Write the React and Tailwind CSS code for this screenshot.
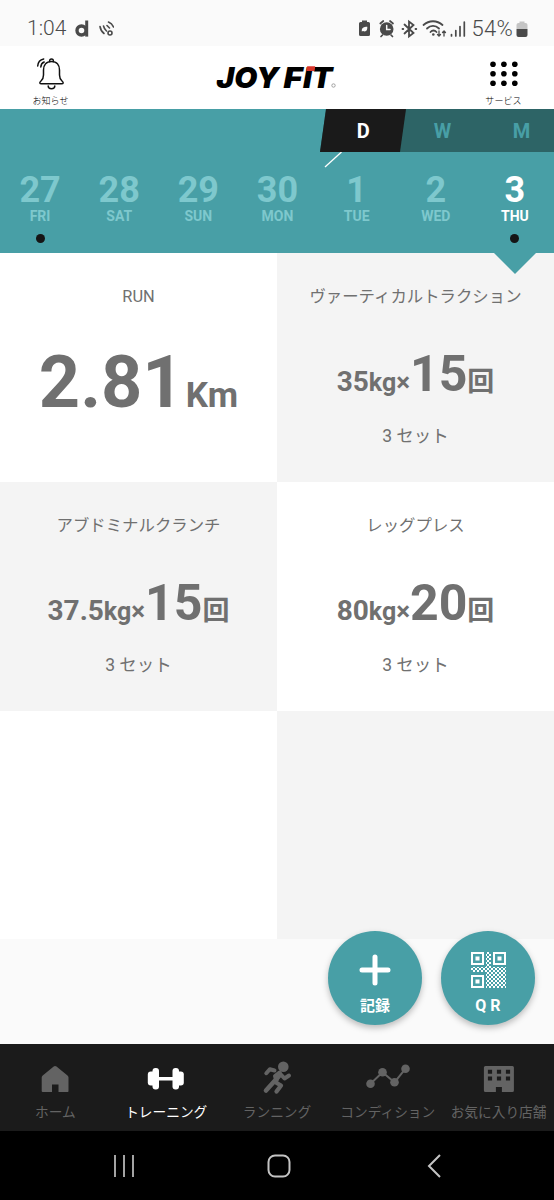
import React from 'react';

const DAYS = [
  { date: '27', day: 'FRI', dot: true },
  { date: '28', day: 'SAT' },
  { date: '29', day: 'SUN' },
  { date: '30', day: 'MON' },
  { date: '1', day: 'TUE' },
  { date: '2', day: 'WED' },
  { date: '3', day: 'THU', dot: true, active: true },
];

const WORKOUTS = [
  { name: 'ヴァーティカルトラクション', weight: '35', reps: '15', bg: 'bg-[#f4f4f4]' },
  { name: 'アブドミナルクランチ', weight: '37.5', reps: '15', bg: 'bg-[#f4f4f4]' },
  { name: 'レッグプレス', weight: '80', reps: '20', bg: 'bg-white' },
];

const StatusBar = () => (
  <div className="h-[46px] bg-[#fafafa] flex items-center pt-[11px] pl-[27px] pr-[26px] text-[#4a4a4a]">
    <span className="text-[21px] leading-none font-light">1:04</span>
    <svg width="40" height="22" viewBox="0 0 40 22" className="ml-[8px]" fill="none" stroke="currentColor">
      <circle cx="7.5" cy="12.5" r="4.5" strokeWidth="3.4" />
      <path d="M12.7 2.5V18.6" strokeWidth="3" />
      <g strokeWidth="1.6" strokeLinecap="round">
        <path d="M26 8.5c.5 3 2 5.500 4 7" />
        <path d="M29.500 8c.5 2 1.500 3.700 3 5" />
        <path d="M33 7.500l2.500 2.500M34.500 4c2.500 1 4 2.500 5 5" />
        <circle cx="36" cy="15" r="2" />
      </g>
    </svg>
    <div className="flex-1" />
    <svg width="108" height="22" viewBox="0 0 108 22" fill="none" stroke="currentColor" strokeLinecap="round">
      <path d="M4 4V2.500h5V4h1.500a1.500 1.500 0 0 1 1.500 1.500v11a1.500 1.500 0 0 1-1.500 1.500h-8a1.500 1.500 0 0 1-1.500-1.500v-11A1.500 1.500 0 0 1 2.500 4z" fill="currentColor" stroke="none" />
      <path d="M3.800 13.500c-.3-4 2-4.500 5.500-4.700.2 3.700-1.300 5.500-4.300 4.200" fill="#fafafa" stroke="none" />
      <circle cx="28.700" cy="11" r="6.800" fill="currentColor" stroke="none" />
      <path d="M22.300 5.500l3-2.500M35 5.500l-3-2.500M24.500 17l-1.500 1.500M33 17l1.500 1.500" strokeWidth="1.700" />
      <path d="M28.700 7.500V11.500h3.300" stroke="#fafafa" strokeWidth="1.500" />
      <path d="M46.500 6.500l9 8.500-4.500 3.500V3.500l4.500 3.500-9 8.500M44.500 11h.8M57.500 11h.8" strokeWidth="1.800" />
      <g strokeWidth="1.800">
        <path d="M65.500 7c5.500-5 13.500-5 19 0" />
        <path d="M69 10.500c3.500-3.500 8.500-3.500 12 0" />
        <path d="M72.500 14c1.800-2 4.200-2 6 0" />
      </g>
      <circle cx="75.300" cy="16.500" r="1.300" fill="currentColor" stroke="none" />
      <path d="M81 13v5M79.500 16.500l1.500 1.500 1.500-1.500M86 18v-5M84.500 14.500l1.500-1.500 1.500 1.500" strokeWidth="1.300" />
      <path d="M93.500 16.500v1.500M97.800 12.500v5.500M102 8.500v9.500M106.300 4V18" strokeWidth="1.700" />
    </svg>
    <span className="ml-[5px] text-[22px] leading-none font-light tracking-[0.3px]">54%</span>
    <svg width="12" height="18" viewBox="0 0 12 18" className="ml-[3px]">
      <path d="M3.500 1.500h5V3h1a2 2 0 0 1 2 2v4H.5V5a2 2 0 0 1 2-2h1z" fill="#c4c4c4" />
      <path d="M.5 9h11v6a2 2 0 0 1-2 2h-7a2 2 0 0 1-2-2z" fill="#4a4a4a" />
    </svg>
  </div>
);

const Header = () => (
  <header className="h-[63px] bg-white flex justify-between text-black">
    <button className="w-[101px] flex flex-col items-center pt-[10px]">
      <svg width="32" height="35" viewBox="0 0 32 35" fill="none" stroke="#111" strokeWidth="1.500" strokeLinecap="round" strokeLinejoin="round">
        <path d="M14.700 5.500c-.7-3.500 4.300-3.500 3.600 0" />
        <path d="M16.500 5.500c-5.500 0-8 4-8 8.500v5c0 3-.8 4.500-2.500 6-2 1.700-1.300 2.800.5 2.800h20c1.800 0 2.500-1.100.5-2.800-1.700-1.500-2.500-3-2.500-6v-5c0-4.500-2.500-8.500-8-8.500z" />
        <path d="M13.200 30c0 3.500 6.600 3.500 6.600 0" />
        <path d="M2.700 10c.3-4 2.300-6.200 6-7M5.800 11c.2-2.500 1.300-4.200 3.400-5" />
      </svg>
      <span className="text-[9px] leading-[13px] mt-[4px] tracking-[0.1px] font-light">お知らせ</span>
    </button>
    <svg width="130" height="40" viewBox="0 0 130 40" className="mt-[10px]" fontFamily="Inter, 'Liberation Sans', sans-serif" fontWeight="900" fontStyle="italic" fontSize="28.500">
      <text x="4.500" y="31.500" textLength="62.500" lengthAdjust="spacingAndGlyphs">JOY</text>
      <text x="71.500" y="31.500" textLength="19" lengthAdjust="spacingAndGlyphs">F</text>
      <text x="91" y="31.500" textLength="9" lengthAdjust="spacingAndGlyphs">I</text>
      <text x="99.500" y="31.500" textLength="21" lengthAdjust="spacingAndGlyphs">T</text>
      <path d="M95.200 10.300h8l-.9 4.700h-8z" fill="#d8352b" />
      <circle cx="121.500" cy="29.500" r="1.700" fill="none" stroke="#999" strokeWidth=".9" />
    </svg>
    <button className="w-[101px] flex flex-col items-center pt-[10px]">
      <svg width="32" height="35" viewBox="1 0 32 35">
        {[8.2, 17.7, 27.2].map((y) =>
          [6, 16.9, 27.8].map((x) => <circle key={`${x}-${y}`} cx={x} cy={y} r="2.800" />)
        )}
      </svg>
      <span className="text-[9px] leading-[13px] mt-[4px] tracking-[0.1px] font-light">サービス</span>
    </button>
  </header>
);

const Calendar = () => (
  <section className="h-[144px] bg-[#489fa6]">
    <div className="h-[43px] overflow-hidden pl-[323px]">
      <div className="w-[260px] h-[43px] flex -skew-x-[8deg] bg-[#2d6466] text-[20px] leading-[45px] font-bold text-[#489fa6] text-center">
        <div className="w-[80px] shrink-0 bg-[#1a1a1a] text-white"><span className="inline-block skew-x-[8deg]">D</span></div>
        <div className="w-[79px] shrink-0"><span className="inline-block skew-x-[8deg]">W</span></div>
        <div className="w-[79px] shrink-0"><span className="inline-block skew-x-[8deg]">M</span></div>
      </div>
    </div>
    <svg width="20" height="16" viewBox="0 0 20 16" className="ml-[323px] block">
      <path d="M2 15L18.500 0" stroke="#fff" strokeWidth="1.300" />
    </svg>
    <div className="grid grid-cols-7 text-center font-bold">
      {DAYS.map(({ date, day, dot, active }) => (
        <div key={date} className={`relative h-[85px] flex flex-col items-center pl-[1px] pt-[3px] ${active ? 'text-white' : 'text-[#7ec8cd]'}`}>
          <span className="text-[36px] leading-[38px]">{date}</span>
          <span className="text-[14px] leading-[14px]">{day}</span>
          {dot && <span className="size-[9px] rounded-full bg-[#151515] mt-[11px]" />}
          {active && (
            <svg width="42" height="21" viewBox="0 0 42 21" className="absolute top-[85px] left-[19px]">
              <path d="M0 0h42L21 21z" fill="#489fa6" />
            </svg>
          )}
        </div>
      ))}
    </div>
  </section>
);

const WorkoutCard = ({ name, weight, reps, bg }) => (
  <div className={`flex flex-col items-center pt-[32px] ${bg}`}>
    <h3 className="text-[16.4px] leading-[24px]">{name}</h3>
    <p className="h-[60px] mt-[35px] flex items-baseline leading-[60px] font-bold">
      <span className="text-[28px]">{weight}</span>
      <span className="text-[25px]">kg</span>
      <span className="text-[26px]">×</span>
      <span className="text-[50px]">{reps}</span>
      <span className="text-[27px]">回</span>
    </p>
    <p className="text-[17.500px] leading-[24px] mt-[20px]">3 セット</p>
  </div>
);

const Fab = ({ label, children }) => (
  <button className="size-[94px] rounded-full bg-[#489fa6] text-white flex flex-col items-center shadow-[0_3px_6px_rgba(0,0,0,0.25)]">
    {children}
    {label}
  </button>
);

const Finder = ({ x, y }) => (
  <g>
    <rect x={x + 1} y={y + 1} width="11" height="11" fill="none" stroke="#fff" strokeWidth="2" />
    <rect x={x + 4.5} y={y + 4.5} width="4" height="4" fill="#fff" />
  </g>
);

const QrIcon = () => (
  <svg width="35" height="36" viewBox="0 0 35 36" className="mt-[21px]">
    <defs>
      <pattern id="dots" width="4" height="4" patternUnits="userSpaceOnUse">
        <rect width="2" height="2" fill="#fff" />
        <rect x="2" y="2" width="2" height="2" fill="#fff" />
      </pattern>
    </defs>
    <Finder x={0} y={0} />
    <Finder x={22} y={0} />
    <Finder x={0} y={23} />
    <path d="M15 0h5v15h15v21H15V20H0v-5h15z" fill="url(#dots)" />
  </svg>
);

const TABS = [
  {
    label: 'ホーム',
    icon: (
      <path d="M24 10c.6 0 1 .2 1.500.6l11 9c.7.600 1 1.200 1 2V35c0 .7-.4 1-1 1h-9v-7.500h-6.500V36h-9c-.7 0-1.300-.4-1.300-1V21.600c0-.8.3-1.400 1-2l11-9c.5-.4.800-.6 1.300-.6z" fill="currentColor" />
    ),
  },
  {
    label: 'トレーニング',
    active: true,
    icon: (
      <g fill="currentColor">
        <rect x="5.800" y="15.500" width="9" height="14" rx="3" />
        <rect x="10.500" y="12" width="6.500" height="21.500" rx="3" />
        <rect x="16" y="21" width="16" height="3.500" />
        <rect x="30.500" y="12" width="6.500" height="21.500" rx="3" />
        <rect x="32.800" y="15.500" width="9" height="14" rx="3" />
      </g>
    ),
  },
  {
    label: 'ランニング',
    icon: (
      <g fill="none" stroke="currentColor" strokeLinecap="round" strokeLinejoin="round">
        <circle cx="30.300" cy="10.700" r="5.300" fill="currentColor" stroke="none" />
        <path d="M13.300 17.200l3.500-4 4.700 1.300" strokeWidth="4" />
        <path d="M13 34.500L26.500 19.500" strokeWidth="4.600" />
        <path d="M22 20l4.500-3.500-3 8z" fill="currentColor" strokeWidth="4" />
        <path d="M26.500 17l5 5.500 4.500-3" strokeWidth="4" />
        <path d="M22 26l6 3.500-4.500 6" strokeWidth="4.300" />
      </g>
    ),
  },
  {
    label: 'コンディション',
    icon: (
      <g fill="currentColor">
        <path d="M6.500 27.700l12-11.400 12 10 11-13.600" fill="none" stroke="currentColor" strokeWidth="2" />
        <circle cx="6.500" cy="27.700" r="4.300" />
        <circle cx="18.500" cy="16.300" r="4.300" />
        <circle cx="30.500" cy="26.300" r="4.300" />
        <circle cx="41.500" cy="12.700" r="4.300" />
      </g>
    ),
  },
  {
    label: 'お気に入り店舗',
    icon: (
      <path fillRule="evenodd" fill="currentColor" d="M10.400 10h27a1.500 1.500 0 0 1 1.500 1.500v23a1.500 1.500 0 0 1-1.500 1.500H26.900v-5h-6v5H10.400a1.500 1.500 0 0 1-1.500-1.500v-23A1.500 1.500 0 0 1 10.400 10zM12.900 13.700v4h4.200v-4zM21.900 13.700v4h4.200v-4zM30.900 13.700v4h4.200v-4zM12.900 20.500v4h4.200v-4zM21.900 20.500v4h4.200v-4zM30.900 20.500v4h4.200v-4z" />
    ),
  },
];

const BottomNav = () => (
  <nav className="h-[87px] bg-[#1b1b1b] grid grid-cols-5">
    {TABS.map(({ label, icon, active }) => (
      <button key={label} className={`flex flex-col items-center pt-[12px] ${active ? 'text-white' : 'text-[#636363]'}`}>
        <svg width="48" height="40" viewBox="0 0 48 40">{icon}</svg>
        <span className="text-[13.700px] leading-[20px] mt-[6px] whitespace-nowrap">{label}</span>
      </button>
    ))}
  </nav>
);

const SystemNav = () => (
  <div className="h-[69px] bg-black pl-[46px] pr-[43px] grid grid-cols-3 items-center justify-items-center">
    <svg width="26" height="26" viewBox="0 0 26 26" stroke="#b5b5b5" strokeWidth="1.800">
      <path d="M4 2v22M13 2v22M22 2v22" />
    </svg>
    <svg width="26" height="26" viewBox="0 0 26 26" fill="none" stroke="#c4c4c4" strokeWidth="2">
      <rect x="2.500" y="2.500" width="21" height="21" rx="6.500" />
    </svg>
    <svg width="26" height="26" viewBox="0 0 26 26" fill="none" stroke="#c4c4c4" strokeWidth="2">
      <path d="M19 2L8 13l11 11" />
    </svg>
  </div>
);

const App = () => {
  const [first, ...others] = WORKOUTS;

  return (
    <div className="relative w-[554px] h-[1200px] overflow-hidden bg-[#fafafa] flex flex-col font-[Roboto,'Noto_Sans_CJK_JP',sans-serif]">
      <StatusBar />
      <Header />
      <Calendar />

      <main className="h-[791px] text-[#707070]">
        <div className="grid grid-cols-2 grid-rows-[229px_229px_228px]">
          <div className="bg-white flex flex-col items-center pt-[32px]">
            <h3 className="text-[16.400px] leading-[24px]">RUN</h3>
            <p className="h-[90px] mt-[29px] flex items-baseline leading-[90px] font-bold">
              <span className="text-[72px]">2.81</span>
              <span className="text-[35px] ml-[2px]">Km</span>
            </p>
          </div>
          <WorkoutCard {...first} />
          {others.map((w) => <WorkoutCard key={w.name} {...w} />)}
          <div className="bg-white" />
          <div className="bg-[#f4f4f4]" />
        </div>
      </main>

      <div className="absolute left-[328px] top-[931px] flex gap-[19px]">
        <Fab label={<span className="text-[15px] leading-[20px] font-bold mt-[10px]">記録</span>}>
          <svg width="32" height="32" viewBox="0 0 32 32" className="mt-[23px]" stroke="#fff" strokeWidth="5" strokeLinecap="round">
            <path d="M16 3v26M3 16h26" />
          </svg>
        </Fab>
        <Fab label={<span className="text-[16px] leading-[20px] font-bold mt-[8px]">Q R</span>}>
          <QrIcon />
        </Fab>
      </div>

      <BottomNav />
      <SystemNav />
    </div>
  );
};

export default App;
